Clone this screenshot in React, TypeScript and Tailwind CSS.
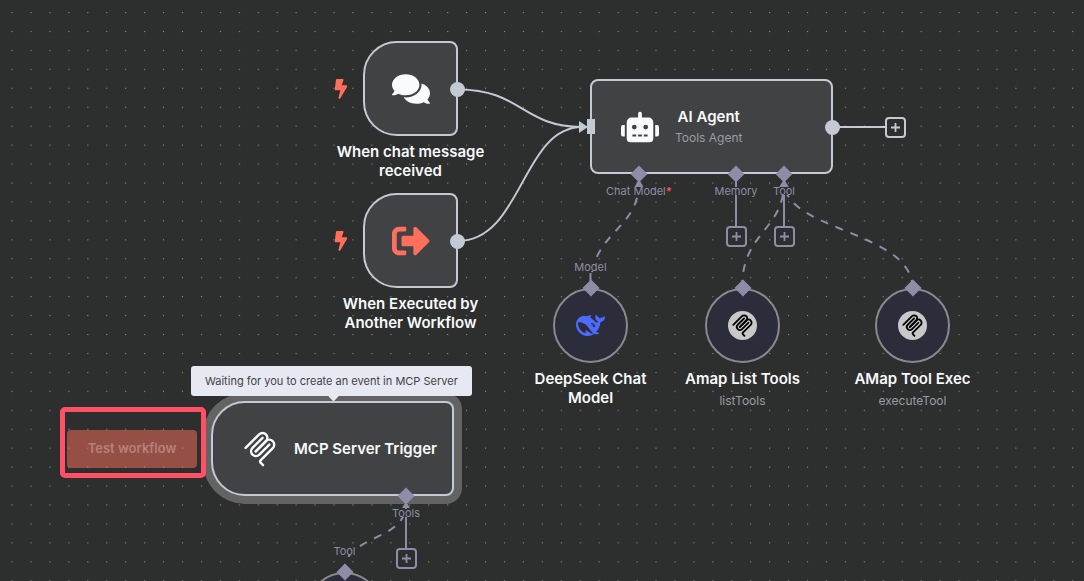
import type { ReactNode } from "react";
import { FaBolt, FaComments, FaRobot, FaSignOutAlt } from "react-icons/fa";

function McpIcon({ className }: { className: string }) {
  return (
    <svg
      viewBox="0 0 180 180"
      className={className}
      fill="none"
      stroke="currentColor"
      strokeLinecap="round"
      aria-hidden="true"
    >
      <path d="M18 84.8528L85.8822 16.9706C95.2548 7.59798 110.451 7.59798 119.823 16.9706C129.196 26.3431 129.196 41.5391 119.823 50.9117L68.5581 102.177" />
      <path d="M69.2652 101.47L119.823 50.9117C129.196 41.5391 144.392 41.5391 153.765 50.9117L154.118 51.2652C163.491 60.6378 163.491 75.8338 154.118 85.2063L92.7248 146.6C89.6006 149.724 89.6006 154.789 92.7248 157.913L105.331 170.52" />
      <path d="M102.853 33.9411L52.6482 84.1457C43.2756 93.5183 43.2756 108.714 52.6482 118.087C62.0208 127.459 77.2167 127.459 86.5893 118.087L136.794 67.8822" />
    </svg>
  );
}

function DeepSeekIcon() {
  return (
    <svg viewBox="0 0 24 24" className="size-[29px] text-[#4d6bfe]" fill="currentColor" aria-hidden="true">
      <path d="M23.748 4.482c-.254-.124-.364.113-.512.234-.051.039-.094.09-.137.136-.372.397-.806.657-1.373.626-.829-.046-1.537.214-2.163.848-.133-.782-.575-1.248-1.247-1.548-.352-.156-.708-.311-.955-.65-.172-.241-.219-.51-.305-.774-.055-.16-.11-.323-.293-.35-.2-.031-.278.136-.356.276-.313.572-.434 1.202-.422 1.84.027 1.436.633 2.58 1.838 3.393.137.093.172.187.129.323-.082.28-.18.552-.266.833-.055.179-.137.217-.329.14a5.526 5.526 0 01-1.736-1.18c-.857-.828-1.631-1.742-2.597-2.458a11.365 11.365 0 00-.689-.471c-.985-.957.13-1.743.388-1.836.27-.098.093-.432-.779-.428-.872.004-1.67.295-2.687.684a3.055 3.055 0 01-.465.137 9.597 9.597 0 00-2.883-.102c-1.885.21-3.39 1.102-4.497 2.623C.082 8.606-.231 10.684.152 12.85c.403 2.284 1.569 4.175 3.36 5.653 1.858 1.533 3.997 2.284 6.438 2.14 1.482-.085 3.133-.284 4.994-1.86.47.234.962.327 1.78.397.63.059 1.236-.03 1.705-.128.735-.156.684-.837.419-.961-2.155-1.004-1.682-.595-2.113-.926 1.096-1.296 2.746-2.642 3.392-7.003.05-.347.007-.565 0-.845-.004-.17.035-.237.23-.256a4.173 4.173 0 001.545-.475c1.396-.763 1.96-2.015 2.093-3.517.02-.23-.004-.467-.247-.588zM11.581 18c-2.089-1.642-3.102-2.183-3.52-2.16-.392.024-.321.471-.235.763.09.288.207.486.371.739.114.167.192.416-.113.603-.673.416-1.842-.14-1.897-.167-1.361-.802-2.5-1.86-3.301-3.307-.774-1.393-1.224-2.887-1.298-4.482-.02-.386.093-.522.477-.592a4.696 4.696 0 011.529-.039c2.132.312 3.946 1.265 5.468 2.774.868.86 1.525 1.887 2.202 2.891.72 1.066 1.494 2.082 2.48 2.914.348.292.625.514.891.677-.802.09-2.14.11-3.054-.614zm1-6.44a.306.306 0 01.415-.287.302.302 0 01.2.288.306.306 0 01-.31.307.303.303 0 01-.304-.308zm3.11 1.596c-.2.081-.399.151-.59.16a1.245 1.245 0 01-.798-.254c-.274-.23-.47-.358-.552-.758a1.73 1.73 0 01.016-.588c.07-.327-.008-.537-.239-.727-.187-.156-.426-.199-.688-.199a.559.559 0 01-.254-.078c-.11-.054-.2-.19-.114-.358.028-.054.16-.186.192-.21.356-.202.767-.136 1.146.016.352.144.618.408 1.001.782.391.451.462.576.685.914.176.265.336.537.445.848.067.195-.019.354-.25.452z" />
    </svg>
  );
}

function McpBadge() {
  return (
    <span className="flex size-[29px] items-center justify-center rounded-full bg-[#c8c8c8] text-black">
      <McpIcon className="size-[23px] stroke-14" />
    </span>
  );
}

function Grid() {
  return (
    <svg className="absolute inset-0 size-full" aria-hidden="true">
      <defs>
        <pattern id="dots" x="11.5" y="12" width="18.94" height="18.94" patternUnits="userSpaceOnUse">
          <rect width="1.1" height="1.1" fill="#8c8d8d" />
        </pattern>
      </defs>
      <rect width="100%" height="100%" fill="url(#dots)" />
    </svg>
  );
}

function Edges() {
  return (
    <svg className="absolute inset-0 size-full" fill="none" strokeWidth="2" aria-hidden="true">
      <g stroke="#c3c9d5">
        <path d="M458 89.5C522 89.500 522 127 582 127" />
        <path d="M458 241C522 241 522 127 582 127" />
        <path d="M833 127H885" />
      </g>
      <path d="M579 121L588 127L579 133Z" fill="#c3c9d5" />
      <g stroke="#8d8da8">
        <path d="M736 174V226" />
        <path d="M784 174V226" />
        <path d="M406 496V548" />
        <path d="M590.500 273V288" />
        <g strokeDasharray="8 8">
          <path d="M590.500 288C590.500 231 639 231 639 182" />
          <path d="M742 288C742 231 784 231 784 182" />
          <path d="M912.500 288C912.500 231 784 231 784 182" />
          <path d="M344 572C344 534 406 542 406 504" />
        </g>
      </g>
      <g fill="#8d8da8">
        <path d="M639 179L644 188H634Z" />
        <path d="M784 179L790 189H778Z" />
        <path d="M406 501L410 508H402Z" />
      </g>
    </svg>
  );
}

function Title({ children }: { children: ReactNode }) {
  return <h2 className="text-[15px] leading-[19px] font-semibold text-[#f8f9fb]">{children}</h2>;
}

function Diamond() {
  return <span className="relative size-3 shrink-0 rotate-45 bg-[#8d8da8]" />;
}

function PortLabel({ children }: { children: ReactNode }) {
  return (
    <span className="relative bg-[#2d2e2e] text-[11px] leading-2 whitespace-nowrap text-[#8d8da8]">{children}</span>
  );
}

function AddButton({ className, label }: { className: string; label: string }) {
  return (
    <button
      type="button"
      aria-label={label}
      className={`flex size-[21px] shrink-0 items-center justify-center rounded-[4px] border-2 border-current bg-[#2d2e2e] ${className}`}
    >
      <svg viewBox="0 0 9 9" className="size-[9px]" stroke="currentColor" strokeWidth="1.8" aria-hidden="true">
        <path d="M4.5 0V9M0 4.500H9" />
      </svg>
    </button>
  );
}

function InputPort({ className, label, addLabel }: { className: string; label: ReactNode; addLabel?: string }) {
  return (
    <div className={`flex flex-col items-center ${className}`}>
      <Diamond />
      <div className="flex flex-col pt-[7px] pb-[31px]">
        <PortLabel>{label}</PortLabel>
      </div>
      {addLabel && <AddButton className="text-[#8d8da8]" label={addLabel} />}
    </div>
  );
}

function TriggerNode({ className, icon, children }: { className: string; icon: ReactNode; children: ReactNode }) {
  return (
    <section className={`absolute flex flex-col items-center gap-[6px] text-center ${className}`}>
      <div className="flex items-center gap-3 pr-8">
        <FaBolt className="size-5 text-[#ff6f5c]" />
        <div className="relative flex size-[95px] items-center justify-center rounded-l-[34px] rounded-r-[8px] border-2 border-[#c3c9d5] bg-[#414244]">
          {icon}
          <span className="absolute top-[39px] -right-[9px] size-[15px] rounded-full bg-[#c3c9d5]" />
        </div>
      </div>
      <Title>{children}</Title>
    </section>
  );
}

function RoundNode({
  className,
  port,
  icon,
  title,
  subtitle,
}: {
  className: string;
  port?: string;
  icon?: ReactNode;
  title?: ReactNode;
  subtitle?: string;
}) {
  return (
    <section className={`absolute flex w-[141px] flex-col items-center text-center ${className}`}>
      <div className="flex h-[19px] flex-col">{port && <PortLabel>{port}</PortLabel>}</div>
      <div className="z-10 -mb-[6px] flex">
        <Diamond />
      </div>
      <div className="flex size-[75px] shrink-0 items-center justify-center rounded-full border-2 border-[#89898d] bg-[#2c2d3b]">
        {icon}
      </div>
      {title && (
        <div className="pt-[6px]">
          <Title>{title}</Title>
        </div>
      )}
      {subtitle && <p className="pt-[5px] text-[12px] leading-4 text-[#9a9ca3]">{subtitle}</p>}
    </section>
  );
}

export default function App() {
  return (
    <main className="relative h-screen w-full overflow-hidden bg-[#2d2e2e] font-['Inter',sans-serif]">
      <Grid />
      <Edges />

      <TriggerNode className="top-[41px] left-[331px]" icon={<FaComments className="size-[38px] text-[#fafbfd]" />}>
        When chat message
        <br />
        received
      </TriggerNode>
      <TriggerNode className="top-[193px] left-[331px]" icon={<FaSignOutAlt className="size-[38px] text-[#ff6f5c]" />}>
        When Executed by
        <br />
        Another Workflow
      </TriggerNode>

      <section className="absolute top-[79px] left-[590px] flex w-[243px] flex-col">
        <div className="relative flex h-[95px] items-center gap-4 rounded-[8px] border-2 border-[#c3c9d5] bg-[#414244] pl-[29px]">
          <FaRobot className="size-[38px] text-[#fafbfd]" />
          <div className="flex flex-col items-center gap-1">
            <Title>AI Agent</Title>
            <p className="text-[12px] leading-4 text-[#9a9ca3]">Tools Agent</p>
          </div>
          <span className="absolute top-[38px] -left-[5px] h-[15px] w-2 bg-[#c3c9d5]" />
          <div className="absolute top-[39px] left-[233px] flex items-center gap-[45px]">
            <span className="size-[15px] rounded-full bg-[#c3c9d5]" />
            <AddButton className="-my-[3px] text-[#c3c9d5]" label="Add node after AI Agent" />
          </div>
        </div>
        <div className="-mt-[6px] flex">
          <InputPort
            className="mr-6 w-[98px]"
            label={
              <>
                Chat Model<span className="font-bold text-[#ff4d5e]">*</span>
              </>
            }
          />
          <InputPort className="w-12" label="Memory" addLabel="Add memory" />
          <InputPort className="w-12" label="Tool" addLabel="Add tool" />
        </div>
      </section>

      <RoundNode
        className="top-[263px] left-[520px]"
        port="Model"
        icon={<DeepSeekIcon />}
        title={
          <>
            DeepSeek Chat
            <br />
            Model
          </>
        }
      />
      <RoundNode className="top-[263px] left-[672px]" icon={<McpBadge />} title="Amap List Tools" subtitle="listTools" />
      <RoundNode className="top-[263px] left-[842px]" icon={<McpBadge />} title="AMap Tool Exec" subtitle="executeTool" />

      <section className="absolute top-[401px] left-[211px] flex w-[243px] flex-col">
        <div className="flex h-[95px] items-center gap-4 rounded-l-[34px] rounded-r-[8px] border-2 border-[#c3c9d5] bg-[#414244] pl-[29px] ring-8 ring-[#636363]">
          <McpIcon className="size-9 stroke-12 text-[#fafbfd]" />
          <Title>MCP Server Trigger</Title>
        </div>
        <div className="-mt-[6px] flex justify-end pr-6">
          <InputPort className="w-12" label="Tools" addLabel="Add MCP tool" />
        </div>
      </section>
      <RoundNode className="top-[547px] left-[274px]" port="Tool" />

      <div
        role="tooltip"
        className="absolute top-[366px] left-[191px] rounded-[3px] bg-[#e6e9f2] px-[14px] py-[7px] text-[11px] leading-4 whitespace-nowrap text-[#414244]"
      >
        Waiting for you to create an event in MCP Server
        <span className="absolute -bottom-[4px] left-[139px] size-[7px] rotate-45 bg-[#e6e9f2]" />
      </div>

      <div className="absolute top-[407px] left-[60px] rounded-[5px] border-5 border-[#ff5065] pt-[18px] pr-1 pb-[5px] pl-[2px]">
        <button
          type="button"
          disabled
          className="block h-[38px] w-[130px] rounded-[4px] bg-[#ff6f5c]/50 text-[13px] font-semibold text-white/30"
        >
          Test workflow
        </button>
      </div>
    </main>
  );
}
